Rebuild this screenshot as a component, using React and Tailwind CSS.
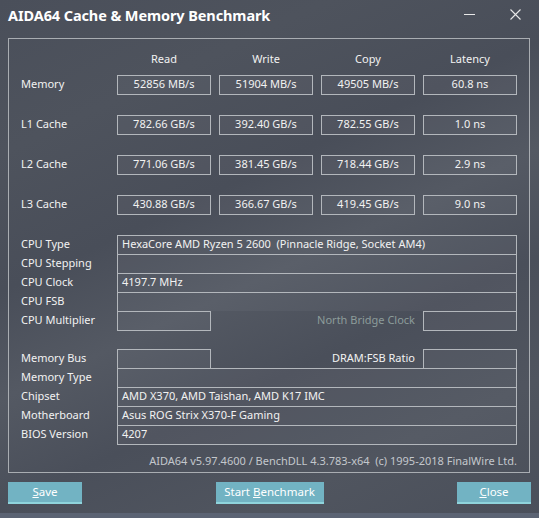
import React from 'react';

const font = { fontFamily: '"Noto Sans", "Open Sans", Arial, sans-serif' };

const bench = [
  { label: 'Memory', values: ['52856 MB/s', '51904 MB/s', '49505 MB/s', '60.8 ns'] },
  { label: 'L1 Cache', values: ['782.66 GB/s', '392.40 GB/s', '782.55 GB/s', '1.0 ns'] },
  { label: 'L2 Cache', values: ['771.06 GB/s', '381.45 GB/s', '718.44 GB/s', '2.9 ns'] },
  { label: 'L3 Cache', values: ['430.88 GB/s', '366.67 GB/s', '419.45 GB/s', '9.0 ns'] },
];

const Cell = ({ children }) => (
  <div className="h-[20px] border border-[#b3b7bc] bg-white/[0.04] flex items-center justify-center text-[11px] text-[#f2f2f2]">
    {children}
  </div>
);

const InfoRow = ({ label, value, last }) => (
  <div className="flex h-[19px]">
    <div className="w-[96px] flex items-center text-[11px] text-[#f2f2f2]">{label}</div>
    <div
      className={`w-[400px] border-t border-x border-[#b3b7bc] bg-white/[0.04] flex items-center pl-[4px] text-[11px] text-[#f2f2f2] whitespace-pre ${last ? 'border-b h-[20px]' : ''}`}
    >
      {value}
    </div>
  </div>
);

const SplitRow = ({ label, mid, midClass }) => (
  <div className="flex h-[20px]">
    <div className="w-[96px] flex items-center text-[11px] text-[#f2f2f2]">{label}</div>
    <div className="w-[94px] border border-[#b3b7bc] bg-white/[0.04]"></div>
    <div className={`w-[212px] flex items-center justify-end pr-[8px] text-[11px] ${midClass}`}>{mid}</div>
    <div className="w-[94px] border border-[#b3b7bc] bg-white/[0.04]"></div>
  </div>
);

const Button = ({ children, width }) => (
  <button className={`${width} h-[22px] bg-[#72b3c3] border-b-2 border-[#8fd4dc] text-white text-[11.5px] flex items-center justify-center`}>
    {children}
  </button>
);

export default function App() {
  return (
    <div
      style={font}
      className="w-[539px] h-[518px] flex flex-col overflow-hidden bg-[linear-gradient(155deg,#4a4f5a_0%,#4e535d_20%,#494e59_38%,#545963_52%,#4a4f5a_66%,#50555f_82%,#4a4f5a_100%)]"
    >
      {/* title bar */}
      <div className="h-[38px] flex items-start pt-[5px] pl-[8px] pr-[18px]">
        <div className="text-[14.5px] font-bold text-white tracking-[-0.1px]">AIDA64 Cache &amp; Memory Benchmark</div>
        <div className="ml-auto flex items-center gap-[35px] pt-[4px]">
          <svg width="11" height="11" viewBox="0 0 11 11">
            <line x1="0" y1="5.5" x2="11" y2="5.5" stroke="#e8e8e8" strokeWidth="1" />
          </svg>
          <svg width="11" height="11" viewBox="0 0 11 11">
            <path d="M0.5 0.5 L10.5 10.5 M10.5 0.5 L0.5 10.5" stroke="#e8e8e8" strokeWidth="1.1" />
          </svg>
        </div>
      </div>

      {/* group box */}
      <div className="ml-[8px] w-[522px] h-[435px] border border-[#a9adb2] px-[12px] flex flex-col">
        <div className="grid grid-cols-[88px_94px_94px_94px_94px] gap-x-[8px] mt-[12px] text-[11px] text-[#f2f2f2]">
          <div></div>
          <div className="text-center">Read</div>
          <div className="text-center">Write</div>
          <div className="text-center">Copy</div>
          <div className="text-center">Latency</div>
        </div>

        <div className="flex flex-col gap-[20px] mt-[7px]">
          {bench.map((row) => (
            <div key={row.label} className="grid grid-cols-[88px_94px_94px_94px_94px] gap-x-[8px]">
              <div className="flex items-center text-[11px] text-[#f2f2f2]">{row.label}</div>
              {row.values.map((v, i) => (
                <Cell key={i}>{v}</Cell>
              ))}
            </div>
          ))}
        </div>

        <div className="flex flex-col mt-[20px]">
          <InfoRow label="CPU Type" value="HexaCore AMD Ryzen 5 2600  (Pinnacle Ridge, Socket AM4)" />
          <InfoRow label="CPU Stepping" value="" />
          <InfoRow label="CPU Clock" value="4197.7 MHz" />
          <InfoRow label="CPU FSB" value="" />
          <SplitRow label="CPU Multiplier" mid="North Bridge Clock" midClass="text-[#8c9c9a]" />
        </div>

        <div className="flex flex-col mt-[18px]">
          <SplitRow label="Memory Bus" mid="DRAM:FSB Ratio" midClass="text-[#f2f2f2]" />
          <div className="-mt-[1px]">
            <InfoRow label="Memory Type" value="" />
          </div>
          <InfoRow label="Chipset" value="AMD X370, AMD Taishan, AMD K17 IMC" />
          <InfoRow label="Motherboard" value="Asus ROG Strix X370-F Gaming" />
          <InfoRow label="BIOS Version" value="4207" last />
        </div>

        <div className="mt-[9px] text-right text-[11px] text-[#c3c7cc] whitespace-pre">
          AIDA64 v5.97.4600 / BenchDLL 4.3.783-x64  (c) 1995-2018 FinalWire Ltd.
        </div>
      </div>

      {/* buttons */}
      <div className="flex items-center justify-between px-[8px] mt-[9px]">
        <Button width="w-[74px]">
          <span><span className="underline">S</span>ave</span>
        </Button>
        <Button width="w-[108px]">
          <span>Start <span className="underline">B</span>enchmark</span>
        </Button>
        <Button width="w-[74px]">
          <span><span className="underline">C</span>lose</span>
        </Button>
      </div>

      <div className="mt-auto h-[5px] bg-[#5b6373]"></div>
    </div>
  );
}
